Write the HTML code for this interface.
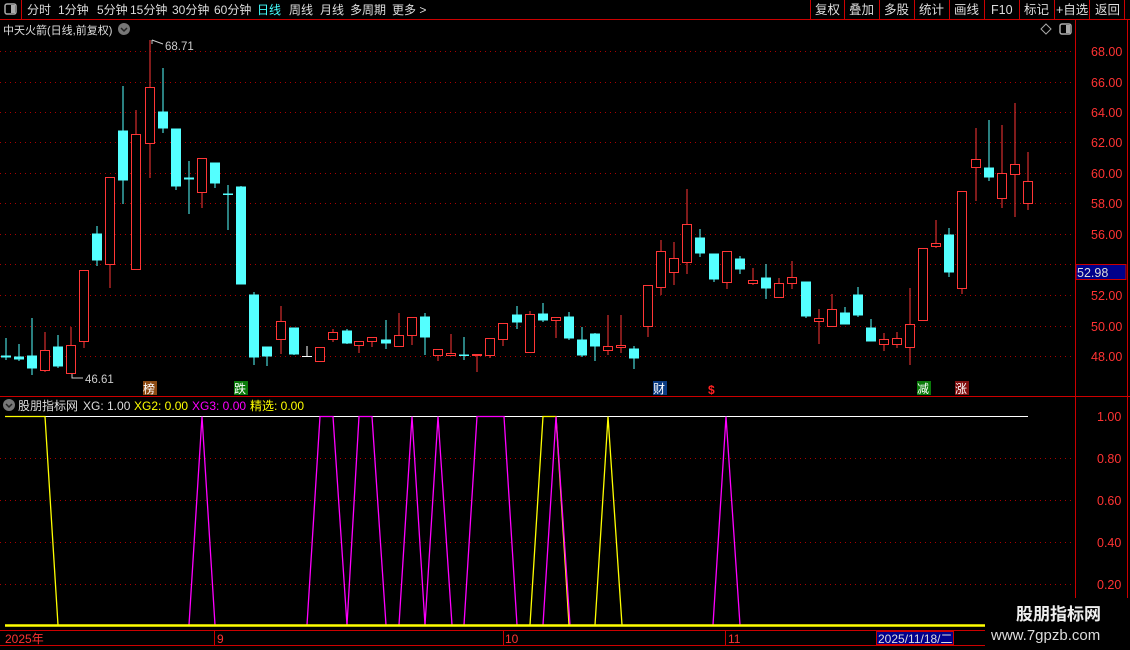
<!DOCTYPE html>
<html><head><meta charset="utf-8"><style>
html,body{margin:0;padding:0;background:#000;width:1130px;height:650px;overflow:hidden}
svg{display:block;font-family:"Liberation Sans","Noto Sans CJK SC",sans-serif}
</style></head><body>
<svg width="1130" height="650" viewBox="0 0 1130 650" xmlns="http://www.w3.org/2000/svg">
<rect width="1130" height="650" fill="#000"/>
<line x1="0" y1="19.5" x2="1130" y2="19.5" stroke="#c00"/>
<line x1="21.5" y1="0" x2="21.5" y2="19" stroke="#c00"/>
<rect x="5" y="4" width="11" height="10" rx="2" fill="none" stroke="#aaa" stroke-width="1.5"/><rect x="11" y="5" width="4" height="8" fill="#aaa"/>
<g font-size="12" fill="#ddd">
<text x="27" y="14">分时</text><text x="58" y="14">1分钟</text><text x="97" y="14">5分钟</text><text x="130" y="14">15分钟</text><text x="172" y="14">30分钟</text><text x="214" y="14">60分钟</text>
<text x="257" y="14" fill="#4ff">日线</text><text x="289" y="14">周线</text><text x="320" y="14">月线</text><text x="350" y="14">多周期</text><text x="392" y="14">更多 &gt;</text>
</g>
<g stroke="#c00"><line x1="810.5" y1="0" x2="810.5" y2="19"/><line x1="844.5" y1="0" x2="844.5" y2="19"/><line x1="879.5" y1="0" x2="879.5" y2="19"/><line x1="914.5" y1="0" x2="914.5" y2="19"/><line x1="949.5" y1="0" x2="949.5" y2="19"/><line x1="984.5" y1="0" x2="984.5" y2="19"/><line x1="1019.5" y1="0" x2="1019.5" y2="19"/><line x1="1054.5" y1="0" x2="1054.5" y2="19"/><line x1="1089.5" y1="0" x2="1089.5" y2="19"/><line x1="1124.5" y1="0" x2="1124.5" y2="19"/></g>
<g font-size="12.5" fill="#ddd"><text x="815" y="14">复权</text><text x="849" y="14">叠加</text><text x="884" y="14">多股</text><text x="919" y="14">统计</text><text x="954" y="14">画线</text><text x="991" y="14">F10</text><text x="1024" y="14">标记</text><text x="1056" y="14">+自选</text><text x="1095" y="14">返回</text></g>
<text x="3" y="34" font-size="11" fill="#ddd">中天火箭(日线,前复权)</text>
<circle cx="124" cy="29" r="6" fill="#777"/><path d="M121 28 L124 31 L127 28" stroke="#222" stroke-width="1.5" fill="none"/>
<path d="M1046 24 L1051 29 L1046 34 L1041 29Z" fill="none" stroke="#aaa"/>
<rect x="1060" y="24" width="11" height="10" rx="2" fill="none" stroke="#aaa" stroke-width="1.5"/><rect x="1066" y="25" width="4" height="8" fill="#aaa"/>
<g stroke="#a00" stroke-dasharray="1 4">
<line x1="0" y1="51.5" x2="1075" y2="51.5"/><line x1="0" y1="82.5" x2="1075" y2="82.5"/><line x1="0" y1="112.5" x2="1075" y2="112.5"/><line x1="0" y1="142.5" x2="1075" y2="142.5"/><line x1="0" y1="173.5" x2="1075" y2="173.5"/><line x1="0" y1="203.5" x2="1075" y2="203.5"/><line x1="0" y1="234.5" x2="1075" y2="234.5"/><line x1="0" y1="264.5" x2="1075" y2="264.5"/><line x1="0" y1="295.5" x2="1075" y2="295.5"/><line x1="0" y1="326.5" x2="1075" y2="326.5"/><line x1="0" y1="356.5" x2="1075" y2="356.5"/>
<line x1="0" y1="458.5" x2="1075" y2="458.5"/><line x1="0" y1="500.5" x2="1075" y2="500.5"/><line x1="0" y1="542.5" x2="1075" y2="542.5"/><line x1="0" y1="584.5" x2="1075" y2="584.5"/>
</g>
<g stroke="#c00"><line x1="1075.5" y1="20" x2="1075.5" y2="630"/><line x1="1127.5" y1="20" x2="1127.5" y2="650"/><line x1="0" y1="396.5" x2="1130" y2="396.5"/></g>
<g font-size="12.5" fill="#f33">
<text x="1091" y="56">68.00</text><text x="1091" y="87">66.00</text><text x="1091" y="117">64.00</text><text x="1091" y="147">62.00</text><text x="1091" y="178">60.00</text><text x="1091" y="208">58.00</text><text x="1091" y="239">56.00</text><text x="1091" y="300">52.00</text><text x="1091" y="331">50.00</text><text x="1091" y="361">48.00</text>
<text x="1097" y="421">1.00</text><text x="1097" y="463">0.80</text><text x="1097" y="505">0.60</text><text x="1097" y="547">0.40</text><text x="1097" y="589">0.20</text>
</g>
<rect x="1076" y="264.5" width="50" height="15" fill="#00008b" stroke="#c00"/>
<text x="1077" y="277" font-size="12.5" fill="#ddd">52.98</text>
<g fill="#54ffff" stroke="#54ffff">
<line x1="6" y1="338" x2="6" y2="360"/><rect x="1.5" y="356" width="9" height="1"/>
<line x1="19" y1="344" x2="19" y2="361"/><rect x="14.5" y="357" width="9" height="2"/>
<line x1="32" y1="318" x2="32" y2="375"/><rect x="27.5" y="356" width="9" height="12"/>
<line x1="58" y1="335" x2="58" y2="368"/><rect x="53.5" y="347" width="9" height="19"/>
<line x1="97" y1="226" x2="97" y2="266"/><rect x="92.5" y="234" width="9" height="26"/>
<line x1="123" y1="86" x2="123" y2="204"/><rect x="118.5" y="131" width="9" height="49"/>
<line x1="163" y1="68" x2="163" y2="133"/><rect x="158.5" y="112" width="9" height="16"/>
<line x1="176" y1="129" x2="176" y2="190"/><rect x="171.5" y="129" width="9" height="57"/>
<line x1="189" y1="161" x2="189" y2="214"/><rect x="184.5" y="178" width="9" height="1"/>
<line x1="215" y1="163" x2="215" y2="188"/><rect x="210.5" y="163" width="9" height="20"/>
<line x1="228" y1="185" x2="228" y2="230"/><rect x="223.5" y="194" width="9" height="0.5"/>
<line x1="241" y1="186" x2="241" y2="284"/><rect x="236.5" y="187" width="9" height="97"/>
<line x1="254" y1="292" x2="254" y2="365"/><rect x="249.5" y="295" width="9" height="62"/>
<line x1="267" y1="347" x2="267" y2="366"/><rect x="262.5" y="347" width="9" height="9"/>
<line x1="294" y1="328" x2="294" y2="355"/><rect x="289.5" y="328" width="9" height="26"/>
<line x1="347" y1="329" x2="347" y2="344"/><rect x="342.5" y="331" width="9" height="12"/>
<line x1="386" y1="320" x2="386" y2="349"/><rect x="381.5" y="340" width="9" height="3"/>
<line x1="425" y1="313" x2="425" y2="355"/><rect x="420.5" y="317" width="9" height="20"/>
<line x1="464" y1="337" x2="464" y2="360"/><rect x="459.5" y="355" width="9" height="0.5"/>
<line x1="517" y1="306" x2="517" y2="329"/><rect x="512.5" y="315" width="9" height="7"/>
<line x1="543" y1="303" x2="543" y2="322"/><rect x="538.5" y="314" width="9" height="6"/>
<line x1="569" y1="312" x2="569" y2="340"/><rect x="564.5" y="317" width="9" height="21"/>
<line x1="582" y1="327" x2="582" y2="357"/><rect x="577.5" y="340" width="9" height="15"/>
<line x1="595" y1="333" x2="595" y2="361"/><rect x="590.5" y="334" width="9" height="12"/>
<line x1="634" y1="346" x2="634" y2="369"/><rect x="629.5" y="349" width="9" height="9"/>
<line x1="700" y1="229" x2="700" y2="257"/><rect x="695.5" y="238" width="9" height="15"/>
<line x1="714" y1="254" x2="714" y2="282"/><rect x="709.5" y="254" width="9" height="25"/>
<line x1="740" y1="256" x2="740" y2="274"/><rect x="735.5" y="259" width="9" height="10"/>
<line x1="766" y1="264" x2="766" y2="299"/><rect x="761.5" y="278" width="9" height="10"/>
<line x1="806" y1="282" x2="806" y2="318"/><rect x="801.5" y="282" width="9" height="34"/>
<line x1="845" y1="307" x2="845" y2="324"/><rect x="840.5" y="313" width="9" height="11"/>
<line x1="858" y1="287" x2="858" y2="317"/><rect x="853.5" y="295" width="9" height="20"/>
<line x1="871" y1="319" x2="871" y2="341"/><rect x="866.5" y="328" width="9" height="13"/>
<line x1="949" y1="228" x2="949" y2="277"/><rect x="944.5" y="235" width="9" height="37"/>
<line x1="989" y1="120" x2="989" y2="181"/><rect x="984.5" y="168" width="9" height="9"/>
</g>
<g stroke="#fff"><line x1="307" y1="346" x2="307" y2="357"/><line x1="302" y1="356.5" x2="312" y2="356.5"/></g>
<g fill="#000" stroke="#ff3636">
<line x1="45" y1="332" x2="45" y2="372"/><rect x="40.5" y="350.5" width="9" height="20"/>
<line x1="71" y1="327" x2="71" y2="374"/><rect x="66.5" y="345.5" width="9" height="28"/>
<line x1="84" y1="270" x2="84" y2="348"/><rect x="79.5" y="270.5" width="9" height="71"/>
<line x1="110" y1="177" x2="110" y2="288"/><rect x="105.5" y="177.5" width="9" height="87"/>
<line x1="136" y1="110" x2="136" y2="269"/><rect x="131.5" y="134.5" width="9" height="135"/>
<line x1="150" y1="40" x2="150" y2="178"/><rect x="145.5" y="87.5" width="9" height="56"/>
<line x1="202" y1="158" x2="202" y2="208"/><rect x="197.5" y="158.5" width="9" height="34"/>
<line x1="281" y1="306" x2="281" y2="354"/><rect x="276.5" y="321.5" width="9" height="18"/>
<line x1="320" y1="347" x2="320" y2="362"/><rect x="315.5" y="347.5" width="9" height="14"/>
<line x1="333" y1="329" x2="333" y2="342"/><rect x="328.5" y="332.5" width="9" height="7"/>
<line x1="359" y1="341" x2="359" y2="353"/><rect x="354.5" y="341.5" width="9" height="4"/>
<line x1="372" y1="337" x2="372" y2="347"/><rect x="367.5" y="337.5" width="9" height="4"/>
<line x1="399" y1="313" x2="399" y2="346"/><rect x="394.5" y="335.5" width="9" height="11"/>
<line x1="412" y1="317" x2="412" y2="345"/><rect x="407.5" y="317.5" width="9" height="18"/>
<line x1="438" y1="349" x2="438" y2="361"/><rect x="433.5" y="349.5" width="9" height="6"/>
<line x1="451" y1="334" x2="451" y2="356"/><rect x="446.5" y="353.5" width="9" height="2"/>
<line x1="477" y1="354" x2="477" y2="372"/><rect x="472.5" y="354.5" width="9" height="1"/>
<line x1="490" y1="338" x2="490" y2="358"/><rect x="485.5" y="338.5" width="9" height="17"/>
<line x1="503" y1="323" x2="503" y2="346"/><rect x="498.5" y="323.5" width="9" height="16"/>
<line x1="530" y1="311" x2="530" y2="352"/><rect x="525.5" y="314.5" width="9" height="38"/>
<line x1="556" y1="317" x2="556" y2="338"/><rect x="551.5" y="317.5" width="9" height="3"/>
<line x1="608" y1="315" x2="608" y2="355"/><rect x="603.5" y="346.5" width="9" height="4"/>
<line x1="621" y1="315" x2="621" y2="353"/><rect x="616.5" y="345.5" width="9" height="2"/>
<line x1="648" y1="285" x2="648" y2="337"/><rect x="643.5" y="285.5" width="9" height="41"/>
<line x1="661" y1="240" x2="661" y2="295"/><rect x="656.5" y="251.5" width="9" height="36"/>
<line x1="674" y1="242" x2="674" y2="285"/><rect x="669.5" y="258.5" width="9" height="14"/>
<line x1="687" y1="189" x2="687" y2="274"/><rect x="682.5" y="224.5" width="9" height="38"/>
<line x1="727" y1="251" x2="727" y2="289"/><rect x="722.5" y="251.5" width="9" height="31"/>
<line x1="753" y1="268" x2="753" y2="285"/><rect x="748.5" y="280.5" width="9" height="3"/>
<line x1="779" y1="278" x2="779" y2="297"/><rect x="774.5" y="283.5" width="9" height="14"/>
<line x1="792" y1="261" x2="792" y2="289"/><rect x="787.5" y="277.5" width="9" height="6"/>
<line x1="819" y1="309" x2="819" y2="344"/><rect x="814.5" y="318.5" width="9" height="3"/>
<line x1="832" y1="294" x2="832" y2="326"/><rect x="827.5" y="309.5" width="9" height="17"/>
<line x1="884" y1="333" x2="884" y2="351"/><rect x="879.5" y="339.5" width="9" height="5"/>
<line x1="897" y1="332" x2="897" y2="348"/><rect x="892.5" y="338.5" width="9" height="6"/>
<line x1="910" y1="288" x2="910" y2="365"/><rect x="905.5" y="324.5" width="9" height="23"/>
<line x1="923" y1="248" x2="923" y2="320"/><rect x="918.5" y="248.5" width="9" height="72"/>
<line x1="936" y1="220" x2="936" y2="248"/><rect x="931.5" y="243.5" width="9" height="3"/>
<line x1="962" y1="191" x2="962" y2="294"/><rect x="957.5" y="191.5" width="9" height="97"/>
<line x1="976" y1="128" x2="976" y2="201"/><rect x="971.5" y="159.5" width="9" height="8"/>
<line x1="1002" y1="125" x2="1002" y2="208"/><rect x="997.5" y="173.5" width="9" height="25"/>
<line x1="1015" y1="103" x2="1015" y2="217"/><rect x="1010.5" y="164.5" width="9" height="10"/>
<line x1="1028" y1="152" x2="1028" y2="210"/><rect x="1023.5" y="181.5" width="9" height="22"/>
</g>
<g font-size="11.5" fill="#ccc"><text x="165" y="50">68.71</text><text x="85" y="383">46.61</text></g>
<path d="M152 40 L152 44 M152 40 L163 44" stroke="#ccc" fill="none"/>
<path d="M72 374 L72 378 L83 378" stroke="#ccc" fill="none"/>
<g font-size="12" fill="#fff">
<rect x="143" y="381" width="14" height="14" fill="#8b4a13"/><text x="143" y="393">榜</text>
<rect x="234" y="381" width="14" height="14" fill="#0a7a0a"/><text x="234" y="393">跌</text>
<rect x="653" y="381" width="14" height="14" fill="#0a3a80"/><text x="653" y="393">财</text>
<text x="708" y="394" fill="#f22" font-weight="bold">$</text>
<rect x="917" y="381" width="14" height="14" fill="#0a7a0a"/><text x="917" y="393">减</text>
<rect x="955" y="381" width="14" height="14" fill="#801010"/><text x="955" y="393">涨</text>
</g>
<circle cx="9" cy="405" r="6" fill="#777"/><path d="M6 404 L9 407 L12 404" stroke="#222" stroke-width="1.5" fill="none"/>
<g font-size="12"><text x="18" y="410" fill="#ddd">股朋指标网</text><text x="83" y="410" fill="#ddd">XG: 1.00</text><text x="134" y="410" fill="#ff0">XG2: 0.00</text><text x="192" y="410" fill="#f0f">XG3: 0.00</text><text x="250" y="410" fill="#ff0">精选: 0.00</text></g>
<line x1="5" y1="416.5" x2="1028" y2="416.5" stroke="#fff"/>
<g fill="none" stroke-width="1.3">
<polyline stroke="#ff0" points="5,416.5 45,416.5 58,625"/>
<polyline stroke="#ff0" points="530,625 543,416.5 556,416.5 569,625"/>
<polyline stroke="#ff0" points="595,625 608,416.5 622,625"/>
<g stroke="#f0f">
<polyline points="189,625 202,416.5 215,625"/>
<polyline points="307,625 320,416.5 333,416.5 347,625"/>
<polyline points="347,625 359,416.5 372,416.5 386,625"/>
<polyline points="399,625 412,416.5 425,625"/>
<polyline points="425,625 438,416.5 452,625"/>
<polyline points="464,625 477,416.5 504,416.5 517,625"/>
<polyline points="543,625 556,416.5 570,625"/>
<polyline points="713,625 726,416.5 740,625"/>
</g></g>
<line x1="5" y1="625.5" x2="985" y2="625.5" stroke="#ff0" stroke-width="2.5"/>
<g stroke="#c00"><line x1="0" y1="630.5" x2="985" y2="630.5"/><line x1="0" y1="645.5" x2="985" y2="645.5"/><line x1="214.5" y1="630" x2="214.5" y2="645"/><line x1="503.5" y1="630" x2="503.5" y2="645"/><line x1="725.5" y1="630" x2="725.5" y2="645"/></g>
<g font-size="12" fill="#f33"><text x="5" y="643">2025年</text><text x="217" y="643">9</text><text x="505" y="643">10</text><text x="728" y="643">11</text></g>
<rect x="876.5" y="631.5" width="77" height="13" fill="#00008b" stroke="#c00"/>
<text x="878" y="643" font-size="12" fill="#ddd">2025/11/18/二</text>
<rect x="985" y="598" width="145" height="52" fill="#000"/>
<text x="1016" y="620" font-size="17" font-weight="bold" fill="#eee">股朋指标网</text>
<text x="991" y="640" font-size="15" fill="#ddd">www.7gpzb.com</text>
</svg>
</body></html>
